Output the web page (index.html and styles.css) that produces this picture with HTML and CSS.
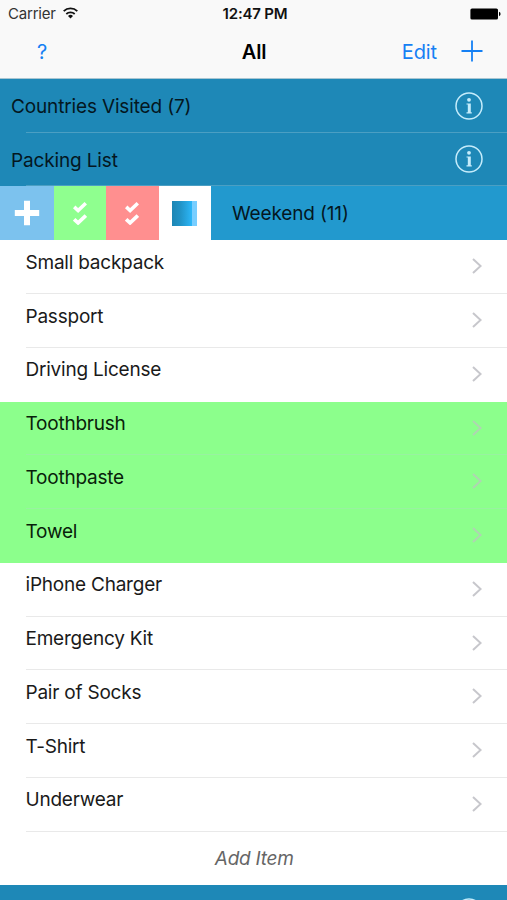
FILE: index.html
```html
<!DOCTYPE html>
<html lang="en">
<head>
<meta charset="utf-8">
<title>All</title>
<link rel="stylesheet" href="styles.css">
</head>
<body>
<svg class="defs" width="0" height="0" aria-hidden="true">
  <symbol id="chevron" viewBox="0 0 10 16"><path d="M1 1l7.6 7L1 15" fill="none" stroke="currentColor" stroke-width="2"/></symbol>
  <symbol id="info" viewBox="0 0 28 28"><circle cx="14" cy="14" r="13" fill="none" stroke="currentColor" stroke-width="1.5"/><circle cx="14" cy="7.8" r="1.9" fill="currentColor"/><path d="M11.5 11.4h4.3v8.8h1v1.2h-5.3v-1.2h1.3v-7.6h-1.3z" fill="currentColor"/></symbol>
  <symbol id="checks" viewBox="0 0 14 24"><path d="M1.2 5.9l3.9 3.6 7.7-7.3M1.2 18.3l3.9 3.6 7.7-7.3" fill="none" stroke="currentColor" stroke-width="3.6"/></symbol>
</svg>
<header class="top">
  <div class="status">
    <div class="carrier"><span>Carrier</span>
      <svg class="wifi" viewBox="0 0 15 12"><g fill="none" stroke="currentColor" stroke-width="1.8"><path d="M.7 4.2a9.8 9.8 0 0 1 13.6 0"/><path d="M3.3 7a6.1 6.1 0 0 1 8.4 0"/></g><path d="M7.5 11.5L5 9a3.5 3.5 0 0 1 5 0z" fill="currentColor"/></svg>
    </div>
    <div class="clock">12:47 PM</div>
    <svg class="battery" viewBox="0 0 31 12"><rect x=".4" y=".4" width="27.6" height="11.2" rx="1.6"/><path d="M29 3.8q1.6.6 1.6 2.2T29 8.2z"/></svg>
  </div>
  <nav class="nav">
    <span class="help">?</span>
    <h1 class="title">All</h1>
    <div class="actions"><span class="edit">Edit</span>
      <svg class="plus" viewBox="0 0 22 22"><path d="M11 .5v21M.5 11h21" stroke="currentColor" stroke-width="1.8"/></svg>
    </div>
  </nav>
</header>
<main>
  <div class="section lined"><span>Countries Visited (7)</span><svg class="info"><use href="#info"/></svg></div>
  <div class="section lined"><span>Packing List</span><svg class="info"><use href="#info"/></svg></div>
  <div class="swiped">
    <div class="tile add"><svg viewBox="0 0 26 26"><path d="M13 .8v24.4M.8 13h24.4" stroke="currentColor" stroke-width="6"/></svg></div>
    <div class="tile check"><svg class="checks"><use href="#checks"/></svg></div>
    <div class="tile uncheck"><svg class="checks"><use href="#checks"/></svg></div>
    <div class="tile color"><div class="swatch"></div></div>
    <div class="weekend"><span>Weekend (11)</span></div>
  </div>
  <div class="row"><span>Small backpack</span><svg class="chevron"><use href="#chevron"/></svg></div>
  <div class="row"><span>Passport</span><svg class="chevron"><use href="#chevron"/></svg></div>
  <div class="row last"><span>Driving License</span><svg class="chevron"><use href="#chevron"/></svg></div>
  <div class="row done"><span>Toothbrush</span><svg class="chevron"><use href="#chevron"/></svg></div>
  <div class="row done"><span>Toothpaste</span><svg class="chevron"><use href="#chevron"/></svg></div>
  <div class="row done last"><span>Towel</span><svg class="chevron"><use href="#chevron"/></svg></div>
  <div class="row"><span>iPhone Charger</span><svg class="chevron"><use href="#chevron"/></svg></div>
  <div class="row"><span>Emergency Kit</span><svg class="chevron"><use href="#chevron"/></svg></div>
  <div class="row"><span>Pair of Socks</span><svg class="chevron"><use href="#chevron"/></svg></div>
  <div class="row"><span>T-Shirt</span><svg class="chevron"><use href="#chevron"/></svg></div>
  <div class="row"><span>Underwear</span><svg class="chevron"><use href="#chevron"/></svg></div>
  <div class="row new last"><span>Add Item</span></div>
  <div class="section"><svg class="info"><use href="#info"/></svg></div>
</main>
</body>
</html>
```

FILE: styles.css
```css
* { box-sizing: border-box; }
html, body { height: 900px; overflow: hidden; }
body {
  margin: 0;
  width: 507px;
  background: #fff;
  color: #1a1a1a;
  font: 400 19px/24px Inter, "Liberation Sans", sans-serif;
  letter-spacing: -0.22px;
}
svg { display: block; flex: none; }
.defs { position: absolute; }

.top { height: 79px; background: #f9f9f9; border-bottom: 1px solid #a9c6d2; }
.status {
  display: grid;
  grid-template-columns: 1fr auto 1fr;
  align-items: center;
  height: 27px;
  padding: 0 6px 0 8px;
  font-size: 15px;
  letter-spacing: -0.2px;
}
.carrier { display: flex; align-items: center; gap: 7px; color: #333; }
.wifi { width: 15px; height: 12px; margin-top: -2px; color: #111; }
.clock { padding-left: 1px; font-weight: 600; font-size: 15px; color: #111; }
.battery { width: 31px; height: 12px; justify-self: end; }
.nav {
  display: grid;
  grid-template-columns: 1fr auto 1fr;
  align-items: center;
  height: 50px;
  padding: 0 24px;
  color: #1580f4;
}
.title { margin: 0 0 0 1px; font-size: 20px; font-weight: 600; color: #000; }
.help { padding-left: 13px; }
.help, .edit { font-size: 20px; letter-spacing: -0.1px; }
.actions { display: flex; justify-content: flex-end; align-items: center; gap: 24px; }
.plus { width: 22px; height: 22px; margin-top: -2px; }

.section {
  display: flex;
  align-items: center;
  height: 53.5px;
  padding: 0 24px 0 11px;
  background: #1e88b7;
  color: #04171f;
}
.section span, .weekend span { padding-top: 2.5px; letter-spacing: -0.15px; }
.info { width: 28px; height: 28px; margin-left: auto; color: #c5ecfb; }
.lined, .row {
  background-image: linear-gradient(#e9e9e9, #e9e9e9);
  background-repeat: no-repeat;
  background-position: 26px 100%;
  background-size: 100% 1px;
}
.lined { background-image: linear-gradient(#4b9fc3, #4b9fc3); }

.swiped { display: flex; height: 54.25px; }
.tile { display: grid; place-items: center; width: 52.5px; color: #fff; }
.add { width: 53.5px; background: #7cc2ee; }
.add svg { width: 26px; height: 26px; }
.check { background: #8fff8f; }
.uncheck { background: #ff8f8f; }
.checks { width: 14px; height: 24px; }
.color { background: #fff; }
.swatch {
  width: 25px;
  height: 25px;
  background: linear-gradient(90deg, #1d86b4, #2194c8 35%, #2bb3f3 75%, #2bb8fa 80%, #78ceff 80%);
}
.weekend { flex: 1; display: flex; align-items: center; padding-left: 21px; background: #2299ce; color: #04171f; }

.row {
  display: flex;
  justify-content: space-between;
  height: 53.75px;
  padding: 10.7px 25px 0 26px;
}
.row span { margin-left: -0.5px; }
.chevron { width: 10px; height: 16px; margin-top: 7.5px; color: #c7c7cc; }
.done { background-color: #8cff8c; background-image: linear-gradient(#98f2a0, #98f2a0); color: #08210a; }
.done .chevron { color: #afd5b2; }
.last { background-image: none; }
.new { justify-content: center; padding: 15.5px 0 0 2px; font-style: italic; color: #666; }
```
